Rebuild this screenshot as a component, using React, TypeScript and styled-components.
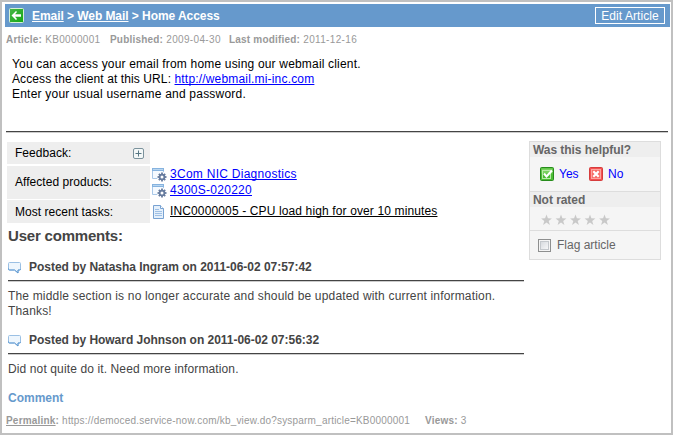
import React from "react";
import styled, { createGlobalStyle } from "styled-components";

const Global = createGlobalStyle`
  * { box-sizing: border-box; }
  body { margin: 0; background: #fff; }
  a { color: inherit; }
`;

const Frame = styled.main`
  width: 673px;
  height: 435px;
  border: 2px solid #c0c0c0;
  padding: 2px 1px 0 3px;
  background: #fff;
  overflow: hidden;
  font: 12px/15px "Liberation Sans", Arial, sans-serif;
  color: #000;
`;

const Header = styled.header`
  height: 23px;
  display: flex;
  align-items: center;
  padding: 0 5px 0 4px;
  background: #6699cc;
  color: #fff;
`;

const Crumbs = styled.nav`
  margin: 2px 0 0 8px;
  font-weight: bold;
  flex: 1;
  white-space: nowrap;
  letter-spacing: -0.06px;
`;

const EditButton = styled.button`
  width: 70px;
  height: 17px;
  padding: 1px 0 0;
  border: 1px solid #fff;
  background: transparent;
  color: #fff;
  font: 12px/14px "Liberation Sans", Arial, sans-serif;
  letter-spacing: 0.06px;
`;

const Meta = styled.div<{ $spacing: number }>`
  display: flex;
  height: 23px;
  padding: 2px 0 0 1px;
  align-items: center;
  font-size: 10px;
  line-height: 12px;
  color: #999;
  white-space: nowrap;
  letter-spacing: ${(p) => p.$spacing}px;

  b {
    letter-spacing: 0.2px;
  }
`;

const MetaItem = styled.span<{ $width: number }>`
  width: ${(p) => p.$width}px;
`;

const Article = styled.article`
  height: 81px;
  padding: 7px 7px 0;
`;

const Line = styled.div<{ $spacing: number }>`
  letter-spacing: ${(p) => p.$spacing}px;
  white-space: nowrap;
`;

const Link = styled.a<{ $tone?: string; $spacing?: number }>`
  color: ${(p) => p.$tone ?? "#0000ff"};
  text-decoration: underline;
  text-decoration-skip-ink: none;
  white-space: nowrap;
  letter-spacing: ${(p) => (p.$spacing === undefined ? "inherit" : `${p.$spacing}px`)};
`;

const Rule = styled.div`
  height: 2px;
  background: #444;
  border-bottom: 1px solid #ccc;
`;

const MainRule = styled(Rule)`
  width: 662px;
  margin-left: 1px;
`;

const Columns = styled.div`
  display: flex;
  justify-content: space-between;
  padding: 8px 9px 0 2px;
`;

const Left = styled.section`
  width: 517px;
`;

const Info = styled.div`
  display: grid;
  grid-template-columns: 143px 1fr;
  grid-template-rows: 22px 33px 23px;
  row-gap: 1.5px;
  padding-top: 1px;
`;

const Label = styled.div`
  display: flex;
  align-items: center;
  justify-content: space-between;
  padding: 1px 6px 0 8px;
  background: #eee;
  letter-spacing: 0.04px;
`;

const Values = styled.div`
  display: flex;
  flex-direction: column;
  justify-content: center;
  padding-left: 2px;
`;

const Value = styled.div`
  display: flex;
  align-items: center;
  gap: 3px;
  height: 16px;
`;

const Title = styled.h2`
  margin: 3px 0 0 1px;
  font-size: 15px;
  line-height: 20px;
  color: #444;
  letter-spacing: -0.2px;
`;

const Comment = styled.section`
  margin-left: 1px;
  color: #444;
  height: 73px;
`;

const CommentHead = styled.div`
  height: 34px;
  display: flex;
  align-items: center;
  gap: 7px;
  padding-top: 9px;
  font-weight: bold;
  white-space: nowrap;
  letter-spacing: -0.03px;
`;

const CommentText = styled.p<{ $spacing: number }>`
  margin: 7px 0 0;
  letter-spacing: ${(p) => p.$spacing}px;
`;

const AddComment = styled.a`
  display: block;
  margin: -1px 0 2px 1px;
  color: #6699cc;
  font-weight: bold;
`;

const Panel = styled.aside`
  width: 132px;
  height: 119px;
  border: 1px solid #ddd;
  background: #f5f5f5;
  color: #666;
`;

const PanelTitle = styled.div`
  height: 15px;
  padding-left: 3px;
  background: #eee;
  color: #666;
  font-weight: bold;
  line-height: 16px;
  letter-spacing: -0.05px;
`;

const PanelRow = styled.div<{ $height: number; $left: number; $top?: number; $last?: boolean }>`
  display: flex;
  align-items: center;
  height: ${(p) => p.$height}px;
  padding-left: ${(p) => p.$left}px;
  padding-top: ${(p) => p.$top ?? 0}px;
  border-bottom: ${(p) => (p.$last ? "0" : "1px solid #ddd")};
`;

const Vote = styled.a`
  display: flex;
  align-items: center;
  gap: 5px;
  width: 49px;
  color: #0000ff;
`;

const Check = styled.span`
  width: 13px;
  height: 13px;
  margin-right: 6px;
  border: 1px solid #8e8f8f;
  background: linear-gradient(135deg, #cfd3d8, #fff);
  box-shadow: inset 0 0 0 1px #f5f5f5, inset 0 0 0 2px #c4c8cc;
`;

const BackIcon = () => (
  <svg width="15" height="15" viewBox="0 0 15 15">
    <defs>
      <linearGradient id="back" x2="1" y2="1">
        <stop stopColor="#48b548" />
        <stop offset="1" stopColor="#13a913" />
      </linearGradient>
    </defs>
    <rect x=".5" y=".5" width="14" height="14" rx="1" fill="url(#back)" stroke="#d6f0d6" />
    <path d="M2.500 7.500 7 3l1 1-2 2.300h6v2.400H6L8 11l-1 1Z" fill="#fff" />
  </svg>
);

const PlusIcon = () => (
  <svg width="11" height="11" viewBox="0 0 11 11">
    <rect x=".5" y=".5" width="10" height="10" rx="1.500" fill="#f4f8f8" stroke="#7b929c" />
    <path d="M2.500 5.500h6M5.500 2.500v6" stroke="#587784" />
  </svg>
);

const teeth = [0, 45, 90, 135];

const ProductIcon = () => (
  <svg width="15" height="15" viewBox="0 0 15 15">
    <path d="M.5 11.500V1.500h11v10Z" fill="#f5faff" stroke="#a9c8e8" />
    <path d="M0 1h12v3H0Z" fill="#86b3df" />
    <path d="M1 2h10v1H1Z" fill="#b9d6f0" />
    <circle cx="10" cy="10" r="5" fill="#fff" />
    {teeth.map((angle) => (
      <path key={angle} d="M10 5.500v9" stroke="#667b9e" strokeWidth="1.800" transform={`rotate(${angle} 10 10)`} />
    ))}
    <circle cx="10" cy="10" r="2.400" fill="#fff" stroke="#667b9e" strokeWidth="1.800" />
  </svg>
);

const TaskIcon = () => (
  <svg width="15" height="14" viewBox="0 0 15 14">
    <path d="M1.500.5h7l3 3v10h-10Z" fill="#e5f0fb" stroke="#78a2d2" />
    <path d="M8.500.5v3h3" fill="#fff" stroke="#78a2d2" />
    <path d="M3 4.500h4M3 6.500h7M3 8.500h7M3 10.500h7" stroke="#9fc0e5" />
  </svg>
);

const BubbleIcon = () => (
  <svg width="14" height="13" viewBox="0 0 14 13">
    <path d="M1.500 1.500h10q1 0 1 1v5.500q0 1-1 1H10v3L6.500 9h-5q-1 0-1-1V2.500q0-1 1-1Z" fill="#eef6fd" stroke="#9bc0e4" />
    <path d="M.5 7.500V8q0 1 1 1h5L10 12V9h1.500q1 0 1-1" fill="none" stroke="#5d98d1" />
  </svg>
);

const YesIcon = () => (
  <svg width="14" height="14" viewBox="0 0 14 14">
    <rect x=".5" y=".5" width="13" height="13" rx="1" fill="#4cbd35" stroke="#278c1c" />
    <path d="M1.500 1.500h11v5h-11Z" fill="#79d25f" />
    <rect x="2.500" y="3.500" width="8" height="8" fill="none" stroke="#b8eaa8" />
    <path d="m4 6.500 2.500 3 5.500-6" fill="none" stroke="#fff" strokeWidth="2.100" />
  </svg>
);

const NoIcon = () => (
  <svg width="14" height="14" viewBox="0 0 14 14">
    <rect x=".5" y=".5" width="13" height="13" rx="1" fill="#f45252" stroke="#d63c3c" />
    <rect x="2.500" y="2.500" width="9" height="9" fill="#f76d66" stroke="#fba49e" />
    <path d="m4.300 4.300 5.400 5.400m0-5.400L4.300 9.700" stroke="#fff" strokeWidth="2.200" />
  </svg>
);

const Stars = () => (
  <svg width="70" height="12" viewBox="0 0 70 12">
    {[0, 1, 2, 3, 4].map((n) => (
      <path
        key={n}
        transform={`translate(${n * 14.5} 0)`}
        d="m5.500.5 1.400 3.800 4 .1-3.200 2.500 1.200 4-3.400-2.300-3.400 2.300 1.200-4L.1 4.400l4-.1Z"
        fill="#c9c9c9"
      />
    ))}
  </svg>
);

export default function App() {
  return (
    <>
      <Global />
      <Frame>
        <Header>
          <BackIcon />
          <Crumbs>
            <Link $tone="#fff" href="#">Email</Link> &gt; <Link $tone="#fff" href="#">Web Mail</Link> &gt; Home Access
          </Crumbs>
          <EditButton>Edit Article</EditButton>
        </Header>
        <Meta $spacing={0.34}>
          <MetaItem $width={104}><b>Article:</b> KB0000001</MetaItem>
          <MetaItem $width={119}><b>Published:</b> 2009-04-30</MetaItem>
          <MetaItem $width={140}><b>Last modified:</b> 2011-12-16</MetaItem>
        </Meta>
        <Article>
          <Line $spacing={0.18}>You can access your email from home using our webmail client.</Line>
          <Line $spacing={0.1}>
            Access the client at this URL: <Link $spacing={0.18} href="#">http://webmail.mi-inc.com</Link>
          </Line>
          <Line $spacing={0.22}>Enter your usual username and password.</Line>
        </Article>
        <MainRule />
        <Columns>
          <Left>
            <Info>
              <Label>Feedback: <PlusIcon /></Label>
              <Values />
              <Label>Affected products:</Label>
              <Values>
                <Value><ProductIcon /><Link $spacing={0.27} href="#">3Com NIC Diagnostics</Link></Value>
                <Value><ProductIcon /><Link $spacing={0.27} href="#">4300S-020220</Link></Value>
              </Values>
              <Label>Most recent tasks:</Label>
              <Values>
                <Value><TaskIcon /><Link $tone="#000" $spacing={0.13} href="#">INC0000005 - CPU load high for over 10 minutes</Link></Value>
              </Values>
            </Info>
            <Title>User comments:</Title>
            <Comment>
              <CommentHead><BubbleIcon />Posted by Natasha Ingram on 2011-06-02 07:57:42</CommentHead>
              <Rule />
              <CommentText $spacing={0.17}>The middle section is no longer accurate and should be updated with current information.<br />Thanks!</CommentText>
            </Comment>
            <Comment>
              <CommentHead><BubbleIcon />Posted by Howard Johnson on 2011-06-02 07:56:32</CommentHead>
              <Rule />
              <CommentText $spacing={0.12}>Did not quite do it. Need more information.</CommentText>
            </Comment>
            <AddComment>Comment</AddComment>
          </Left>
          <Panel>
            <PanelTitle>Was this helpful?</PanelTitle>
            <PanelRow $height={35} $left={10}>
              <Vote><YesIcon />Yes</Vote>
              <Vote><NoIcon />No</Vote>
            </PanelRow>
            <PanelTitle>Not rated</PanelTitle>
            <PanelRow $height={24} $left={11} $top={2}><Stars /></PanelRow>
            <PanelRow $height={28} $left={8} $last><Check />Flag article</PanelRow>
          </Panel>
        </Columns>
        <Meta $spacing={0.2}>
          <MetaItem $width={419}>
            <b><Link $tone="#999" href="#">Permalink</Link>:</b> https://democed.service-now.com/kb_view.do?sysparm_article=KB0000001
          </MetaItem>
          <MetaItem $width={60}><b>Views:</b> 3</MetaItem>
        </Meta>
      </Frame>
    </>
  );
}
